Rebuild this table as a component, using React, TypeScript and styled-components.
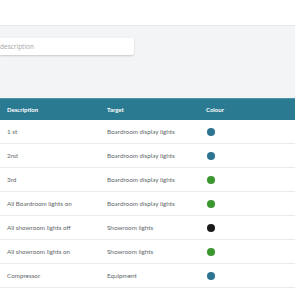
import styled, { createGlobalStyle } from "styled-components";

const GlobalStyle = createGlobalStyle`
    html, body {
        margin: 0;
        padding: 0;
        background: #ffffff;
        font-family: Lato, "Open Sans", "Liberation Sans", sans-serif;
    }
`;

type Preset = {
    description: string;
    target: string;
    colour: string;
};

const presets: Preset[] = [
    { description: "1 st", target: "Boardroom display lights", colour: "#2c7391" },
    { description: "2nd", target: "Boardroom display lights", colour: "#2c7391" },
    { description: "3rd", target: "Boardroom display lights", colour: "#3a962f" },
    { description: "All Boardroom lights on", target: "Boardroom display lights", colour: "#3a962f" },
    { description: "All showroom lights off", target: "Showroom lights", colour: "#1b1b1b" },
    { description: "All showroom lights on", target: "Showroom lights", colour: "#3a962f" },
    { description: "Compressor", target: "Equipment", colour: "#2c7391" },
    { description: "Compressor off", target: "Equipment", colour: "#3a962f" },
];

export default function App() {
    return (
        <>
            <GlobalStyle />
            <Page>
                <TopBar />
                <FilterArea>
                    <SearchInput placeholder="description" />
                </FilterArea>
                <Table>
                    <HeaderRow>
                        <HeadCell>Description</HeadCell>
                        <HeadCell>Target</HeadCell>
                        <HeadCell>Colour</HeadCell>
                    </HeaderRow>
                    {presets.map((p, i) => (
                        <Row key={i}>
                            <Cell>{p.description}</Cell>
                            <Cell>{p.target}</Cell>
                            <Cell>
                                <Dot $colour={p.colour} />
                            </Cell>
                        </Row>
                    ))}
                </Table>
            </Page>
        </>
    );
}

const Page = styled.div`
    width: 295px;
    height: 295px;
    overflow: hidden;
    display: flex;
    flex-direction: column;
`;

const TopBar = styled.div`
    height: 25px;
    flex: none;
    background: #ffffff;
    border-bottom: 1px solid #e6e8ea;
`;

const FilterArea = styled.div`
    height: 72px;
    flex: none;
    background: #f3f4f6;
    padding-top: 12px;
    box-sizing: border-box;
`;

const SearchInput = styled.input`
    display: block;
    width: 134px;
    height: 17px;
    box-sizing: border-box;
    border: none;
    border-radius: 0 2px 2px 0;
    background: #ffffff;
    box-shadow: 0 1px 2px rgba(0, 0, 0, 0.18);
    padding: 0;
    font-family: "Open Sans", Lato, sans-serif;
    font-size: 6.5px;
    color: #444;
    outline: none;
    &::placeholder {
        color: #a2a6aa;
    }
`;

const Table = styled.div`
    display: flex;
    flex-direction: column;
`;

const HeaderRow = styled.div`
    display: grid;
    grid-template-columns: 100px 99px 1fr;
    padding-left: 7px;
    height: 22px;
    flex: none;
    align-items: center;
    background: #2a7a91;
    border-top: 1px solid #4d93a8;
    box-sizing: border-box;
`;

const HeadCell = styled.div`
    color: #ffffff;
    font-size: 6px;
    font-weight: 700;
`;

const Row = styled.div`
    display: grid;
    grid-template-columns: 100px 99px 1fr;
    padding-left: 7px;
    height: 24px;
    align-items: center;
    background: #ffffff;
    border-bottom: 1px solid #e9eaec;
    box-sizing: border-box;
    flex: none;
`;

const Cell = styled.div`
    color: #63676b;
    font-size: 6.3px;
    display: flex;
    align-items: center;
`;

const Dot = styled.span<{ $colour: string }>`
    display: block;
    width: 8px;
    height: 8px;
    margin-left: 1px;
    border-radius: 50%;
    background: ${(p) => p.$colour};
`;
